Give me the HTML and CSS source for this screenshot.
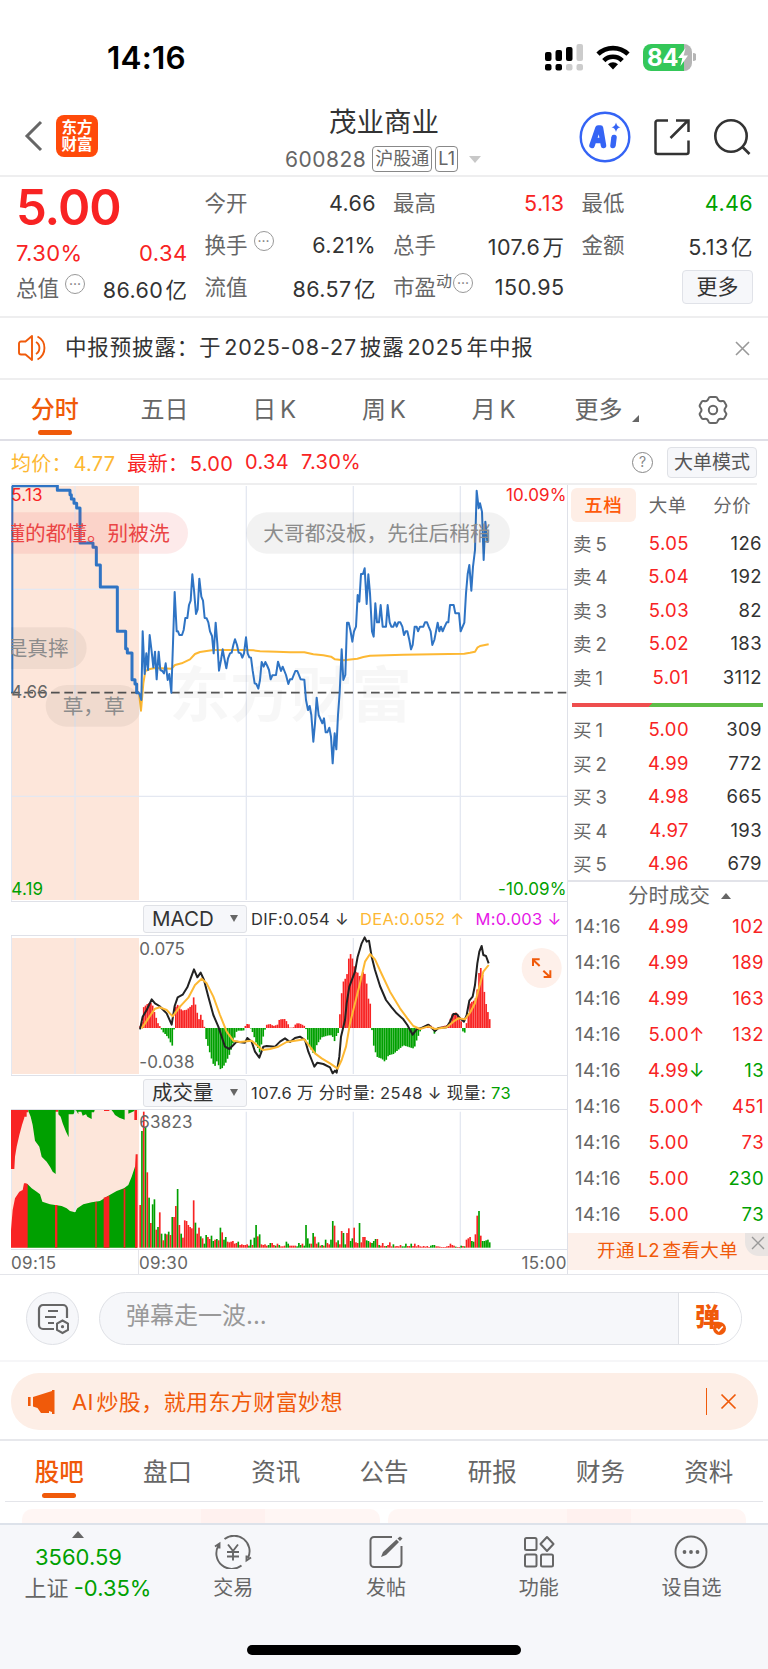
FILE: index.html
```html
<!DOCTYPE html>
<html lang="zh-CN">
<head>
    <meta charset="UTF-8">
    <title>茂业商业 600828</title>
    <link rel="stylesheet" href="styles.css">
</head>
<body>

    <div class="status-bar">
        <span class="clock">14:16</span>
        <div class="status-icons">
            <svg width="38" height="27" viewBox="0 0 38 27">
                <g fill="#000"><rect x="0" y="8" width="6.5" height="9" rx="2"/><rect x="10.5" y="6" width="6.5" height="11" rx="2"/><rect x="21" y="3" width="6.5" height="14" rx="2"/><rect x="0" y="20" width="6.5" height="6.5" rx="2"/><rect x="10.5" y="20" width="6.5" height="6.5" rx="2"/></g>
                <g fill="#ccc"><rect x="31.5" y="0" width="6.5" height="17" rx="2"/><rect x="21" y="20" width="6.5" height="6.5" rx="2"/><rect x="31.5" y="20" width="6.5" height="6.5" rx="2"/></g>
            </svg>
            <svg class="wifi" width="34" height="25" viewBox="0 0 34 25">
                <g fill="none" stroke="#000" stroke-width="4.6"><path d="M2 9.200a21.500 21.500 0 0 1 30 0"/><path d="M7.800 15.600a13 13 0 0 1 18.400 0"/></g>
                <path d="M17 24.500l-5-5.200a7.300 7.300 0 0 1 10 0z"/>
            </svg>
            <div class="battery">84<svg width="10" height="18" viewBox="0 0 10 18"><path d="M7.500 0L0 10h4.300L2.500 18 10 7.500H5.700z" fill="#fff"/></svg></div>
            <svg class="battery-tip" width="3" height="8" viewBox="0 0 3 8"><path d="M0 0a4 4 0 0 1 0 8z" fill="#b5b5b5"/></svg>
        </div>
    </div>

    <div class="nav">
        <div class="nav-left">
            <svg width="20" height="32" viewBox="0 0 20 32"><path d="M17 2L3 16l14 14" fill="none" stroke="#666" stroke-width="3"/></svg>
            <div class="logo">东方<br>财富</div>
        </div>
        <div class="nav-title">
            <div class="stock-name">茂业商业</div>
            <div class="stock-code"><span class="code">600828</span><span class="badge">沪股通</span><span class="badge">L1</span><i class="caret"></i></div>
        </div>
        <div class="nav-right">
            <svg width="52" height="52" viewBox="0 0 52 52">
                <circle cx="26" cy="26" r="24.300" fill="none" stroke="#3564f5" stroke-width="2.400"/>
                <g fill="none" stroke="#3564f5" stroke-width="5.500" stroke-linecap="round" stroke-linejoin="round"><path d="M13 34.500L19 17h2.500L24.500 34.500M17 29.500h6"/><path d="M35 26.500L34 34.500"/></g>
                <path d="M37 11.500q.8 4 4.500 4.800-3.700.8-4.500 4.800-.8-4-4.500-4.800 3.700-.8 4.500-4.800z" fill="#3564f5"/>
            </svg>
            <svg class="share" width="38" height="38" viewBox="0 0 38 38"><g fill="none" stroke="#333" stroke-width="2.500"><path d="M15 2.500H4.500a2 2 0 0 0-2 2V34a2 2 0 0 0 2 2h29a2 2 0 0 0 2-2V22.500"/><path d="M17.500 20L35 2.500M23 2.500h12.500V14"/></g></svg>
            <svg width="40" height="40" viewBox="0 0 40 40"><g fill="none" stroke="#333" stroke-width="2.600"><circle cx="18" cy="19" r="15.700"/><path d="M29.500 30l7 7"/></g></svg>
        </div>
    </div>

    <div class="quote">
        <div class="q-main">
            <div class="price">5.00</div>
            <div class="q-row red"><span>7.30%</span><span>0.34</span></div>
            <div class="q-row last"><label>总值<i class="dots">···</i></label><span>86.60 亿</span></div>
        </div>
        <div class="q-col">
            <div class="q-row"><label>今开</label><span>4.66</span></div>
            <div class="q-row"><label>换手<i class="dots">···</i></label><span>6.21%</span></div>
            <div class="q-row"><label>流值</label><span>86.57 亿</span></div>
        </div>
        <div class="q-col">
            <div class="q-row"><label>最高</label><span class="red">5.13</span></div>
            <div class="q-row"><label>总手</label><span>107.6 万</span></div>
            <div class="q-row"><label>市盈<sup>动</sup><i class="dots">···</i></label><span>150.95</span></div>
        </div>
        <div class="q-col">
            <div class="q-row"><label>最低</label><span class="green">4.46</span></div>
            <div class="q-row"><label>金额</label><span>5.13 亿</span></div>
            <div class="q-row"><div class="more-btn">更多</div></div>
        </div>
    </div>

    <div class="notice">
        <svg width="30" height="26" viewBox="0 0 30 26"><g fill="none" stroke="#f05a0a" stroke-width="1.900" stroke-linejoin="round"><path d="M14 1L7.500 6.500H3a2 2 0 0 0-2 2v9a2 2 0 0 0 2 2h4.500L14 25z"/><path d="M18 7a7 7 0 0 1 0 12M19.500 1.500a13 13 0 0 1 0 23"/></g></svg>
        <span class="notice-text">中报预披露：于 2025-08-27 披露 2025 年中报</span>
        <svg width="15" height="15" viewBox="0 0 15 15"><path d="M1 1l13 13M14 1L1 14" stroke="#999" stroke-width="1.600"/></svg>
    </div>

    <div class="period-tabs">
        <span class="active">分时</span><span>五日</span><span>日 K</span><span>周 K</span><span>月 K</span>
        <span class="tab-more">更多<i></i></span>
        <span class="gear"><svg width="30" height="30" viewBox="0 0 30 30"><g fill="none" stroke="#666" stroke-width="2"><path stroke-linejoin="round" d="M10.500 3.500Q11 2 12.500 2h5q1.500 0 2 1.500 1 3.300 4.500 2.500 1.600-.4 2.300.8l1.700 3q.8 1.400-.3 2.500-2.400 2.700 0 5.400 1.100 1.100.3 2.500l-1.700 3q-.7 1.200-2.300.8-3.500-.8-4.500 2.500-.5 1.500-2 1.500h-5q-1.500 0-2-1.500-1-3.300-4.500-2.500-1.600.4-2.300-.8l-1.700-3q-.8-1.400.3-2.500 2.400-2.700 0-5.400-1.100-1.100-.3-2.500l1.700-3q.7-1.200 2.300-.8 3.500.8 4.500-2.500z"/><circle cx="15" cy="15" r="4.200"/></g></svg></span>
    </div>

    <div class="info">
        <span class="yellow">均价：<s></s>4.77</span>
        <span class="red">最新：<s></s>5.00</span><span class="red">0.34</span><span class="red">7.30%</span>
        <i class="help">?</i>
        <span class="mode-btn">大单模式</span>
    </div>

    <div class="main">
        <div class="charts">
            <svg class="price-chart" width="556" height="416" viewBox="33 45 1668 1248">
                <rect x="33" y="48" width="384" height="1242" fill="#fde6da"/>
                <g class="grid"><path d="M34 48V1293M225 48V1290M739 48V1290M1060 48V1290M1381 48V1290M33 358H1701M33 979H1701"/></g>
                <text class="watermark" x="508" y="740">东方财富</text>
                <path class="base-line" d="M33 668H1701"/>
                <polyline class="avg" points="417,668 423,722 430,640 436,603 450,597 465,594 515,596 525,585 545,580 570,568 585,552 600,546 640,540 735,540 760,541 780,544 830,545 870,547 913,547 940,553 970,556 993,560 1005,568 1030,571 1072,566 1090,561 1110,557 1210,554 1393,551 1410,548 1425,545 1432,533 1440,528 1466,523"/>
                <polyline class="px bold" points="36,47 172,47 172,61 210,61 210,74 214,74 214,87 222,87 222,100 230,100 230,114 240,114 240,219 279,219 279,232 289,232 289,285 301,285 301,351 352,351 352,484 377,484 377,536 382,536 382,549 396,549 396,629 405,629 405,642 410,642 410,668 417,668"/>
                <polyline class="px" points="37,668 37,47"/>
                <polyline class="px" points="417,668 424,690 428,484 434,612 439,550 444,600 449,495 455,545 460,592 465,545 470,628 476,545 481,600 487,603 492,610 497,580 503,630 508,612 514,668 519,520 524,366 530,484 534,484 538,495 546,495 551,480 556,444 562,444 567,405 572,392 577,313 582,360 588,432 593,418 598,326 604,380 609,392 614,444 620,445 625,457 630,484 636,498 641,550 647,458 652,520 657,602 663,570 668,538 673,565 679,595 684,565 690,550 695,548 700,525 705,508 711,525 716,548 722,550 727,563 732,550 738,502 743,550 748,562 753,563 758,602 764,640 769,642 775,656 780,630 785,576 791,590 796,576 802,588 807,600 812,628 817,616 828,615 834,575 843,603 848,590 858,615 865,642 870,628 876,628 886,603 892,603 902,628 913,629 918,690 924,720 929,708 934,735 940,815 945,760 950,683 956,735 967,760 972,745 977,787 982,787 988,773 993,800 998,880 1004,790 1009,838 1014,735 1019,668 1025,538 1030,630 1036,615 1041,458 1046,458 1051,480 1057,515 1062,484 1068,470 1073,375 1078,395 1083,312 1089,312 1094,295 1100,402 1105,313 1110,370 1116,484 1121,500 1126,400 1131,457 1137,457 1142,405 1148,470 1158,470 1163,405 1169,457 1174,470 1180,470 1185,457 1190,470 1195,457 1201,457 1207,470 1212,495 1217,484 1222,484 1228,510 1233,538 1238,525 1244,470 1250,470 1254,484 1260,470 1270,470 1275,457 1281,457 1286,470 1292,484 1297,525 1303,510 1308,484 1313,458 1318,484 1323,470 1328,484 1334,470 1340,457 1345,457 1350,405 1361,405 1366,430 1377,430 1382,484 1388,470 1393,458 1398,370 1403,312 1408,285 1414,362 1419,290 1425,240 1430,62 1436,115 1440,100 1446,125 1451,270 1456,155 1462,215 1466,215"/>
                <g class="danmu">
                    <rect class="hot" x="-40" y="127" width="604" height="124" rx="62"/>
                    <text class="hot-text" x="13" y="213">懂的都懂。别被洗</text>
                    <rect x="739" y="127" width="791" height="124" rx="62"/>
                    <text x="790" y="213">大哥都没板，先往后稍稍</text>
                    <rect x="-40" y="472" width="300" height="125" rx="62"/>
                    <text x="20" y="557">是真摔</text>
                    <rect x="137" y="645" width="287" height="125" rx="62"/>
                    <text x="188" y="731">草，草</text>
                </g>
                <g class="axis">
                    <text class="up" x="34" y="94">5.13</text>
                    <text x="34" y="685">4.66</text>
                    <text class="down" x="34" y="1274">4.19</text>
                    <text class="up" x="1700" y="94" text-anchor="end">10.09%</text>
                    <text class="down" x="1700" y="1274" text-anchor="end">-10.09%</text>
                </g>
            </svg>

            <div class="ind-head">
                <span class="select">MACD<i></i></span>
                <span>DIF:0.054 ↓</span><span class="yellow">DEA:0.052 ↑</span><span class="purple">M:0.003 ↓</span>
            </div>
            <svg class="macd-chart" width="556" height="139" viewBox="33 108 1668 417">
                <rect x="33" y="114" width="384" height="408" fill="#fde6da"/>
                <g class="grid"><path d="M34 108V525M225 114V522M739 114V522M1060 114V522M1381 114V522"/></g>
                <g id="macdBars"></g>
                <polyline class="dif" points="420,388 428,350 440,330 455,298 465,310 478,318 490,330 500,340 515,374 524,318 533,292 548,284 562,262 572,235 582,208 592,232 602,218 612,240 625,290 640,345 655,380 665,410 675,440 688,447 700,435 710,425 735,428 742,414 755,425 765,455 778,473 790,440 800,438 825,440 840,425 855,415 870,426 885,414 900,410 915,420 925,455 935,480 943,500 952,488 970,492 990,502 998,520 1005,512 1010,518 1018,470 1023,410 1035,360 1040,310 1048,260 1065,215 1073,170 1085,130 1094,112 1100,125 1107,122 1115,170 1125,210 1140,258 1158,300 1175,322 1190,340 1210,358 1222,375 1238,404 1250,388 1265,384 1285,374 1305,393 1315,384 1340,382 1350,365 1360,342 1370,342 1380,355 1392,365 1400,345 1408,302 1418,290 1425,255 1432,190 1438,155 1445,138 1450,165 1458,168 1466,190"/>
                <polyline class="avg" points="425,385 445,355 465,326 480,322 500,330 518,349 540,320 565,293 585,255 605,236 620,250 640,290 660,345 680,395 700,422 720,426 755,422 770,435 788,450 810,447 835,440 860,426 900,420 913,418 930,440 945,460 965,475 990,490 1013,506 1025,480 1038,440 1050,370 1065,310 1080,250 1095,185 1110,162 1125,178 1145,222 1170,275 1200,325 1222,355 1240,378 1260,387 1285,379 1305,387 1340,382 1360,365 1375,355 1395,358 1410,338 1425,310 1438,260 1450,215 1466,195"/>
                <circle cx="1625" cy="204" r="60" fill="#fef0ea"/>
                <path d="M1619 198l-20-19M1599 198v-20h20M1630 212l20 19M1651 211v20h-20" fill="none" stroke="#f05a0a" stroke-width="6"/>
                <g class="axis">
                    <text x="418" y="164">0.075</text>
                    <text x="418" y="504">-0.038</text>
                </g>
            </svg>

            <div class="ind-head">
                <span class="select">成交量<i></i></span>
                <span class="vol-text">107.6 万 分时量: 2548 ↓ 现量: <b>73</b></span>
            </div>
            <svg class="vol-chart" width="556" height="139" viewBox="33 105 1668 417">
                <rect x="33" y="105" width="384" height="413" fill="#fde6da"/>
                <g fill="#f82323">
                    <path d="M33 102H85V112H80V125H73V128L66 150 58 180 50 215 45 245 43 282H33zM165 102h10v8h-10zM312 102h16v6h-16zM403 102h8v33h-8zM33 518V465L38 405 45 370 58 350 68 345 72 325H78L84 328V518z"/>
                </g>
                <g fill="#00a000">
                    <path d="M85 102H167V297L158 290 150 275 140 260 125 245 118 215 105 197 98 150 92 125 85 108zM175 102H206V187L198 170 188 145 182 125 175 118zM206 102H285L282 112H275V132L262 125 258 118 248 122 244 110H235V118L228 106 220 118H206zM332 102H374V134L358 128 345 120 340 112zM385 102H403V108L385 116z"/>
                    <path d="M83 518V328L95 340 110 350 120 358 127 380 150 388 170 391 185 393 200 400 210 408 225 412 232 400 250 388 275 382 300 378 325 362 350 348 372 340 385 330 395 305 405 275 411 275V518z"/>
                </g>
                <path d="M165 518V390h7V518zM285 518V381h2V518zM289 518V380h2V518zM311 518V368l17-6V518zM371 518V341h5V518zM405 518V280l2-42h6V518z" fill="#f82323"/>
                <g class="grid"><path d="M34 285V370M225 105V410M739 110V522M1060 110V522M1381 110V522"/></g>
                <g id="volBars"></g>
                <g class="axis"><text x="418" y="160">63823</text></g>
            </svg>
            <div class="time-axis"><span>09:15</span><span>09:30</span><span>15:00</span></div>
        </div>

        <div class="book">
            <div class="book-tabs"><span class="active">五档</span><span>大单</span><span>分价</span></div>
            <div class="level"><span>卖 5</span><b>5.05</b><em>126</em></div>
            <div class="level"><span>卖 4</span><b>5.04</b><em>192</em></div>
            <div class="level"><span>卖 3</span><b>5.03</b><em>82</em></div>
            <div class="level"><span>卖 2</span><b>5.02</b><em>183</em></div>
            <div class="level"><span>卖 1</span><b>5.01</b><em>3112</em></div>
            <div class="ratio"></div>
            <div class="level"><span>买 1</span><b>5.00</b><em>309</em></div>
            <div class="level"><span>买 2</span><b>4.99</b><em>772</em></div>
            <div class="level"><span>买 3</span><b>4.98</b><em>665</em></div>
            <div class="level"><span>买 4</span><b>4.97</b><em>193</em></div>
            <div class="level"><span>买 5</span><b>4.96</b><em>679</em></div>
            <div class="ticks-title">分时成交<i></i></div>
            <div class="tick"><span>14:16</span><b>4.99</b><u></u><em>102</em></div>
            <div class="tick"><span>14:16</span><b>4.99</b><u></u><em>189</em></div>
            <div class="tick"><span>14:16</span><b>4.99</b><u></u><em>163</em></div>
            <div class="tick"><span>14:16</span><b>5.00</b><u>↑</u><em>132</em></div>
            <div class="tick"><span>14:16</span><b>4.99</b><u class="green">↓</u><em class="green">13</em></div>
            <div class="tick"><span>14:16</span><b>5.00</b><u>↑</u><em>451</em></div>
            <div class="tick"><span>14:16</span><b>5.00</b><u></u><em>73</em></div>
            <div class="tick"><span>14:16</span><b>5.00</b><u></u><em class="green">230</em></div>
            <div class="tick"><span>14:16</span><b>5.00</b><u></u><em class="green">73</em></div>
            <div class="l2-ad">开通 L2 查看大单
                <div class="l2-close"><svg width="14" height="14" viewBox="0 0 14 14"><path d="M1 1l12 12M13 1L1 13" stroke="#999" stroke-width="1.400"/></svg></div>
            </div>
        </div>
    </div>

    <div class="send-row">
        <div class="round-btn">
            <svg width="34" height="32" viewBox="0 0 34 32"><g fill="none" stroke="#666" stroke-width="2.200"><path d="M17 26H6a4 4 0 0 1-4-4V6a4 4 0 0 1 4-4h20a4 4 0 0 1 4 4v9"/><path d="M11 8h10M8 14h11M11 20h6"/><path d="M25.500 17.500l5.500 3v6.500l-5.500 3-5.500-3v-6.500z" stroke-width="2"/></g><circle cx="25.500" cy="23.700" r="1.600" fill="#666"/></svg>
        </div>
        <div class="input"><span class="placeholder">弹幕走一波...</span><span class="dan">弹<svg width="13" height="13" viewBox="0 0 13 13"><circle cx="6.500" cy="6.500" r="6.500" fill="#f05a0a"/><path d="M3.500 6.500l2.300 2.400 4-4.400" fill="none" stroke="#fff" stroke-width="1.600"/></svg></span></div>
    </div>

    <div class="ad-wrap">
        <div class="ad">
            <svg width="28" height="24" viewBox="0 0 28 24"><path d="M0 7h2.600v9H0zM5 7L24 1V0h2.500v24H24v-2l-3-1v2h-8l-3.500-5L5 16.500z" fill="#f05a0a"/></svg>
            <span class="ad-text">AI 炒股，就用东方财富妙想</span>
            <i class="ad-line"></i>
            <svg width="17" height="17" viewBox="0 0 17 17"><path d="M1.500 1.500l14 14M15.500 1.500l-14 14" stroke="#f05a0a" stroke-width="1.700"/></svg>
        </div>
    </div>

    <div class="content-tabs">
        <span class="active">股吧</span><span>盘口</span><span>资讯</span><span>公告</span><span>研报</span><span>财务</span><span>资料</span>
    </div>
    <div class="cards"><div></div><div></div></div>

    <div class="bottom-bar">
        <div class="index">
            <i></i>
            <div class="index-value green">3560.59</div>
            <div>上证 <span class="green">-0.35%</span></div>
        </div>
        <div class="item">
            <svg width="38" height="34" viewBox="0 0 38 34"><g fill="none" stroke="#666" stroke-width="1.900"><path d="M10.500 4A15.500 15.500 0 0 1 34 23M27.500 30.500A15.500 15.500 0 0 1 4.500 10.500M1 11.500l4.500-3v5M37 22.500l-4.500 3v-5"/><path d="M14 9.500l5 6.500 5-6.500M13 17h12M13 21.500h12M19 16v9.500"/></g></svg>
            交易
        </div>
        <div class="item">
            <svg width="34" height="34" viewBox="0 0 34 34"><path d="M23 2H5a3.500 3.500 0 0 0-3.500 3.500v23A3.500 3.500 0 0 0 5 32h24a3.500 3.500 0 0 0 3.500-3.500V11" fill="none" stroke="#666" stroke-width="2"/><path d="M12 22l2-5L27.500 4.500l2.500 2.500-13 13zM28.500 3.500L31 1.500l2.500 2-2.500 2.500z" fill="#666"/></svg>
            发帖
        </div>
        <div class="item">
            <svg width="32" height="34" viewBox="0 0 32 34"><g fill="none" stroke="#666" stroke-width="2"><rect x="2" y="3" width="11.500" height="12" rx="1.500"/><rect x="2" y="19.500" width="11.500" height="12" rx="1.500"/><rect x="18" y="19.500" width="12" height="12" rx="1.500"/><path d="M24 2l6.500 7L24 16l-6.500-7z" stroke-linejoin="round"/></g></svg>
            功能
        </div>
        <div class="item">
            <svg width="34" height="34" viewBox="0 0 34 34"><circle cx="17" cy="17" r="15.500" fill="none" stroke="#666" stroke-width="1.900"/><g fill="#666"><circle cx="10.500" cy="17" r="1.900"/><circle cx="17" cy="17" r="1.900"/><circle cx="23.500" cy="17" r="1.900"/></g></svg>
            设自选
        </div>
        <div class="home-line"></div>
    </div>

    <script src="script.js"></script>
</body>
</html>
```
FILE: styles.css
```css
* {
    box-sizing: border-box;
}
body {
    margin: 0;
    width: 768px;
    height: 1669px;
    overflow: hidden;
    position: relative;
    background: #fff;
    color: #333;
    font-family: Inter, "Noto Sans CJK SC", sans-serif;
    font-size: 21px;
}
i, em, u, b {
    font-style: normal;
    font-weight: normal;
    text-decoration: none;
}
svg {
    display: block;
    flex: none;
}
.red { color: #f82323; }
.green { color: #00a000; }
.yellow { color: #fdb833; }
.purple { color: #e617e6; }

/* status bar */
.status-bar {
    height: 100px;
    padding: 14px 72px 0 107px;
    display: flex;
    justify-content: space-between;
    align-items: center;
}
.clock {
    font-size: 31.500px;
    font-weight: 600;
    color: #000;
    letter-spacing: 0.2px;
}
.status-icons {
    display: flex;
    align-items: center;
}
.wifi {
    margin: 0 13px;
}
.battery {
    width: 49px;
    height: 27px;
    border-radius: 8px;
    background: linear-gradient(90deg, #34c759 84%, #b5b5b5 84%);
    color: #fff;
    font-size: 24px;
    font-weight: 700;
    letter-spacing: -0.5px;
    display: flex;
    align-items: center;
    justify-content: center;
}
.battery-tip {
    margin-left: 1px;
}

/* title bar */
.nav {
    height: 77px;
    border-bottom: 2px solid #eeeeef;
    display: flex;
    justify-content: space-between;
}
.nav-left {
    width: 230px;
    padding: 15px 0 0 24px;
    display: flex;
    align-items: flex-start;
}
.nav-left svg {
    margin: 5px 12px 0 0;
}
.logo {
    width: 42px;
    height: 42px;
    border-radius: 8px;
    background: #ff4a0a;
    color: #fff;
    font-size: 15.500px;
    line-height: 17px;
    font-weight: 700;
    text-align: center;
    padding-top: 4px;
}
.nav-title {
    text-align: center;
}
.stock-name {
    font-size: 27.500px;
    line-height: 36px;
    margin-top: 4px;
}
.stock-code {
    display: flex;
    align-items: center;
    justify-content: center;
    color: #666;
    height: 30px;
    margin: 4px 2px 0 0;
}
.code {
    font-size: 21px;
    letter-spacing: 0.5px;
    margin-right: 6px;
}
.badge {
    height: 26px;
    border: 1px solid #888;
    border-radius: 4px;
    font-size: 18px;
    line-height: 24px;
    padding: 0 2px;
    margin-right: 3px;
}
.caret {
    border: 6px solid transparent;
    border-top: 7px solid #c8c8c8;
    border-bottom: 0;
    margin-left: 8px;
}
.nav-right {
    width: 230px;
    padding: 11px 15px 0 0;
    display: flex;
    justify-content: flex-end;
    align-items: flex-start;
}
.share {
    margin: 7px 22px 0 22px;
}
.nav-right svg:last-child {
    margin-top: 6px;
}

/* quote */
.quote {
    height: 141px;
    border-bottom: 2px solid #eeeeef;
    padding: 5px 15px 0 16px;
    display: grid;
    grid-template-columns: repeat(4, 1fr);
    column-gap: 17px;
}
.price {
    height: 51px;
    line-height: 51px;
    font-size: 49px;
    font-weight: 600;
    color: #f82323;
    letter-spacing: -1px;
}
.q-row {
    height: 42px;
    display: flex;
    justify-content: space-between;
    align-items: center;
    white-space: nowrap;
    word-spacing: -4px;
}
.q-main .q-row {
    height: 40px;
}
.q-main .last {
    height: 30px;
}
.q-row label {
    color: #666;
    font-size: 21.500px;
    line-height: 28px;
    display: flex;
    align-items: center;
}
.q-row span {
    font-size: 21.500px;
    letter-spacing: 0.4px;
}
.q-main .red span {
    font-size: 22px;
}
.q-row sup {
    font-size: 16px;
    line-height: 16px;
    align-self: flex-start;
}
.dots {
    width: 20px;
    height: 20px;
    border: 1px solid #999;
    border-radius: 50%;
    font-size: 14px;
    line-height: 17px;
    text-align: center;
    margin: -8px 0 0 6px;
    color: #777;
}
sup + .dots {
    margin-left: 1px;
}
.more-btn {
    width: 71px;
    height: 34px;
    line-height: 31px;
    text-align: center;
    border: 1px solid #e0e2e8;
    border-radius: 4px;
    background: #f6f7fa;
    margin-left: auto;
}

/* notice */
.notice {
    height: 62px;
    border-bottom: 2px solid #eeeeef;
    padding: 0 18px;
    display: flex;
    align-items: center;
}
.notice-text {
    flex: 1;
    padding: 0 0 5px 17px;
    font-size: 21.500px;
    letter-spacing: 0.85px;
    word-spacing: -4px;
}

/* period tabs */
.period-tabs {
    height: 61px;
    border-bottom: 2px solid #dfdfe6;
    display: flex;
    font-size: 24px;
    line-height: 60px;
    color: #666;
    text-align: center;
    white-space: nowrap;
    word-spacing: -3px;
}
.period-tabs span {
    width: 109.700px;
    position: relative;
}
.period-tabs .active, .content-tabs .active {
    color: #f05a0a;
    font-weight: 500;
    position: relative;
}
.period-tabs .active::after, .content-tabs .active::after {
    content: "";
    position: absolute;
    left: 50%;
    bottom: 4px;
    width: 34px;
    height: 5px;
    margin-left: -17px;
    border-radius: 3px;
    background: #f05a0a;
}
.period-tabs .tab-more {
    width: 100px;
}
.tab-more i {
    position: absolute;
    right: 9px;
    bottom: 17px;
    border-left: 7px solid transparent;
    border-bottom: 7px solid #666;
}
.period-tabs .gear {
    width: 118px;
    display: flex;
    align-items: center;
    padding-left: 50px;
}

/* latest values */
.info {
    height: 44px;
    margin: 0 11px;
    border-bottom: 2px solid #eeeeef;
    display: flex;
    align-items: center;
    gap: 12px;
    font-size: 20px;
    letter-spacing: 0.3px;
    white-space: nowrap;
}
.info s {
    padding-left: 1.500px;
}
.help {
    width: 21px;
    height: 21px;
    border: 1.500px solid #888;
    border-radius: 50%;
    font-size: 14px;
    line-height: 18px;
    text-align: center;
    color: #888;
    margin: 0 2px 0 auto;
    letter-spacing: 0;
}
.mode-btn {
    width: 90px;
    height: 31px;
    line-height: 29px;
    text-align: center;
    border: 1px solid #dfe1e6;
    border-radius: 4px;
    background: #f6f7fa;
    color: #555;
    font-size: 19px;
    letter-spacing: 0;
}

/* charts */
.main {
    display: flex;
    height: 790px;
    border-bottom: 1px solid #e4e5ea;
}
.charts {
    width: 568px;
    padding-left: 11px;
    border-right: 1px solid #dfe1e8;
}
.price-chart, .macd-chart, .vol-chart {
    border-bottom: 1px solid #dfe1e8;
    box-sizing: content-box;
}
.grid path {
    fill: none;
    stroke: #e4e8f1;
    stroke-width: 4;
}
.watermark {
    font-size: 182px;
    font-weight: 700;
    fill: #000;
    fill-opacity: 0.03;
}
.base-line {
    stroke: #555;
    stroke-width: 5;
    stroke-dasharray: 26 14;
}
.px, .avg, .dif {
    fill: none;
    stroke-width: 6;
    stroke-linejoin: round;
}
.px { stroke: #2f74c4; }
.px.bold { stroke-width: 9; }
.avg { stroke: #fdb833; }
.dif { stroke: #222; }
.danmu rect {
    fill: #000;
    fill-opacity: 0.052;
}
.danmu .hot {
    fill: #f03c3c;
    fill-opacity: 0.11;
}
.danmu text {
    font-size: 62px;
    fill: #8c8c8c;
}
.danmu .hot-text {
    fill: #ea4545;
}
.axis text {
    font-size: 51px;
    letter-spacing: 0.5px;
    fill: #666;
}
.axis .up { fill: #f82323; }
.axis .down { fill: #00a000; }

.ind-head {
    height: 34px;
    border-bottom: 1px solid #dfe1e8;
    padding-left: 132px;
    display: flex;
    align-items: center;
    gap: 11px;
    font-size: 16.500px;
    letter-spacing: 0.3px;
    white-space: nowrap;
}
.select {
    flex: none;
    width: 104px;
    height: 28px;
    border: 1px solid #dfe1e6;
    border-radius: 3px;
    background: #f6f7fa;
    padding: 0 8px;
    margin-right: -7px;
    font-size: 20.500px;
    letter-spacing: 0;
    line-height: 24px;
    display: flex;
    align-items: center;
    justify-content: space-between;
}
.select i {
    border: 4px solid transparent;
    border-top: 7px solid #666;
    border-bottom: 0;
}
.vol-text {
    padding-bottom: 2px;
    letter-spacing: 0.55px;
    word-spacing: -0.5px;
}
.vol-text b {
    color: #00a000;
}
.time-axis {
    height: 25px;
    display: flex;
    align-items: center;
    font-size: 17px;
    letter-spacing: 0.4px;
    color: #666;
}
.time-axis span:first-child {
    width: 128px;
    height: 25px;
    line-height: 27px;
    border-right: 1px solid #e4e5ea;
}
.time-axis span:last-child {
    margin-left: auto;
}

/* order book */
.book {
    width: 200px;
    padding: 3px 0 0 0;
    color: #666;
    font-size: 18.500px;
    letter-spacing: 0.4px;
}
.book-tabs {
    display: flex;
    padding-left: 3px;
    height: 38px;
}
.book-tabs span {
    width: 64.500px;
    height: 34px;
    line-height: 34px;
    text-align: center;
    border-radius: 6px;
}
.book-tabs .active {
    color: #ff5a0a;
    background: #feeee6;
    font-weight: 500;
}
.level, .tick {
    height: 33.500px;
    display: flex;
    align-items: center;
    padding: 0 6px 0 5px;
    word-spacing: -2px;
}
.level span {
    width: 50px;
}
.level b {
    width: 66px;
    text-align: right;
    color: #f82323;
}
.level em {
    flex: 1;
    text-align: right;
    color: #333;
}
.ratio {
    height: 4px;
    margin: 9px 5px 6px 4px;
    background: linear-gradient(135deg, #ee4e4e 41.200%, #5fbd47 41.200%);
}
.ticks-title {
    height: 29px;
    border-top: 2px solid #e2e3e9;
    font-size: 20.500px;
    letter-spacing: 0;
    line-height: 26px;
    padding-left: 60px;
    display: flex;
    align-items: center;
}
.ticks-title i, .index i {
    border: 5px solid transparent;
    border-bottom: 6px solid #666;
    border-top: 0;
    margin-left: 11px;
}
.tick {
    height: 35.900px;
    padding: 0 4px 1px 7px;
}
.tick span {
    width: 50px;
}
.tick b {
    width: 64px;
    text-align: right;
    color: #f82323;
}
.tick u {
    width: 14px;
    color: #f82323;
}
.tick em {
    flex: 1;
    text-align: right;
    color: #f82323;
}
.tick .green {
    color: #00a000;
}
.l2-ad {
    height: 37px;
    line-height: 34px;
    margin-top: 1px;
    background: #fdf0ea;
    color: #f05a0a;
    font-size: 18.500px;
    padding-left: 29px;
    word-spacing: -3px;
    position: relative;
}
.l2-close {
    position: absolute;
    right: 0;
    top: 0;
    width: 23px;
    height: 23px;
    padding: 3px 0 0 6px;
    border-bottom-left-radius: 14px;
    background: #e9e4e2;
}

/* danmu input */
.send-row {
    height: 87px;
    border-bottom: 2px solid #f6f6f8;
    display: flex;
    align-items: center;
    padding: 2px 26px 0;
}
.round-btn {
    width: 53px;
    height: 53px;
    border: 1px solid #dfe1e6;
    border-radius: 50%;
    background: #f6f7fa;
    display: flex;
    align-items: center;
    justify-content: center;
    padding-left: 3px;
}
.input {
    width: 643px;
    height: 53px;
    margin-left: 20px;
    border: 1px solid #dfe1e6;
    border-radius: 27px;
    background: #f6f7fa;
    overflow: hidden;
    display: flex;
}
.placeholder {
    flex: 1;
    padding-left: 26px;
    line-height: 46px;
    font-size: 24px;
    color: #999;
}
.dan {
    width: 63px;
    border-left: 1px solid #dfe1e6;
    background: #fff;
    color: #f05a0a;
    font-size: 25px;
    font-weight: 900;
    line-height: 48px;
    padding-left: 16px;
    position: relative;
}
.dan svg {
    position: absolute;
    left: 34px;
    top: 29px;
}

/* promo strip */
.ad-wrap {
    height: 79px;
    border-bottom: 2px solid #e7e8ec;
    padding: 11px 10px 0 11px;
}
.ad {
    height: 57px;
    border-radius: 28px;
    background: #fdeee6;
    color: #f05a0a;
    padding: 0 21px 0 17px;
    display: flex;
    align-items: center;
}
.ad-text {
    flex: 1;
    padding: 0 0 4px 16px;
    font-size: 22px;
    letter-spacing: 0.4px;
    word-spacing: -4px;
}
.ad-line {
    width: 1px;
    height: 27px;
    background: #f05a0a;
    margin-right: 13px;
}

.content-tabs {
    height: 61px;
    margin: 0 5px;
    border-bottom: 1px solid #e4e5ea;
    display: flex;
    font-size: 24.500px;
    line-height: 63px;
    color: #666;
    text-align: center;
}
.content-tabs span {
    flex: 1;
}
.content-tabs .active::after {
    bottom: 3px;
}
.cards {
    display: flex;
    gap: 8px;
    padding: 7px 22px 0;
}
.cards div {
    flex: 1;
    height: 20px;
    border-radius: 10px 10px 0 0;
    background: linear-gradient(90deg, #fff6f4 50%, #fff1ef 50%, #fff1ef 68%, #fff6f4 68%);
}

/* bottom bar */
.bottom-bar {
    position: absolute;
    left: 0;
    bottom: 0;
    width: 768px;
    height: 146px;
    border-top: 2px solid #dde2ea;
    background: #f6f7fa;
    display: flex;
    color: #666;
}
.index {
    width: 157px;
    font-size: 22px;
    line-height: 31px;
    text-align: center;
    white-space: nowrap;
    padding-left: 19px;
    word-spacing: -1px;
}
.index i {
    display: block;
    width: 12px;
    border-width: 0 6px 7px;
    margin: 6px auto 4px 53px;
}
.index-value {
    margin-right: 19px;
}
.item {
    width: 152.700px;
    padding-top: 10px;
    display: flex;
    flex-direction: column;
    align-items: center;
    gap: 3px;
    font-size: 20px;
}
.home-line {
    position: absolute;
    left: 247px;
    bottom: 14px;
    width: 274px;
    height: 10px;
    border-radius: 5px;
    background: #000;
}
```
FILE: script.js
```js
const RED = '#f82323';
const GREEN = '#00a000';
const START = 420;   // x of the 09:30 bar
const STEP = 5.35;   // one minute

function addBar(box, x, y, h, color) {
    const r = document.createElementNS('http://www.w3.org/2000/svg', 'rect');
    r.setAttribute('x', x);
    r.setAttribute('y', y);
    r.setAttribute('width', 5);
    r.setAttribute('height', h);
    r.setAttribute('fill', color);
    box.appendChild(r);
}

// MACD histogram, [x, value], filled in minute by minute
const macd = [
    [417,0],[425,15],[430,62],[445,75],[455,76],[465,40],[475,10],[482,2],[486,-10],[495,-18],[505,-30],[516,-54],[521,-35],
    [523,60],[535,72],[545,52],[560,55],[575,68],[581,94],[590,50],[597,25],[602,40],[608,22],[612,10],
    [615,-22],[625,-60],[635,-95],[643,-118],[650,-100],[662,-126],[675,-108],[690,-75],[700,-40],[710,-8],[730,-8],
    [738,12],[746,12],[751,0],[757,-12],[765,-35],[778,-75],[790,-22],[795,-3],[800,10],[810,12],[820,6],[832,10],[838,26],
    [855,27],[862,15],[870,0],[880,2],[888,14],[898,14],[910,8],[917,3],[919,-20],[928,-55],[943,-82],[950,-50],[965,-28],
    [985,-22],[997,-22],[1001,-46],[1008,-24],[1013,-24],[1016,8],[1021,60],[1027,135],[1040,155],[1044,200],[1050,225],
    [1058,205],[1065,170],[1075,165],[1080,150],[1090,170],[1098,155],[1102,95],[1110,75],[1114,20],[1116,-15],[1122,-62],
    [1132,-88],[1145,-92],[1155,-102],[1165,-82],[1180,-78],[1195,-65],[1210,-52],[1235,-60],[1242,-62],[1250,-35],
    [1260,-10],[1265,2],[1285,12],[1298,3],[1303,-18],[1310,-5],[1320,3],[1345,10],[1355,40],[1365,48],[1375,40],[1385,15],
    [1388,-10],[1394,-14],[1400,20],[1410,75],[1425,85],[1432,120],[1438,180],[1445,180],[1455,85],[1465,40],[1473,10]
];
const macdBox = document.getElementById('macdBars');
for (let i = 0; i < 197; i++) {
    const x = START + i * STEP;
    const n = macd.findIndex(p => p[0] > x);
    if (n < 1) continue;
    const a = macd[n - 1], b = macd[n];
    const v = a[1] + (b[1] - a[1]) * (x - a[0]) / (b[0] - a[0]);
    addBar(macdBox, x - 2, v > 0 ? 384 - v : 384, Math.abs(v), v > 0 ? RED : GREEN);
}

// volume per minute
const volume = ('r128 g350 r408 g360 r226 g150 r74 g130 g145 r54 g62 r106 g42 r22 g42 r40 g48 r38 g92 r92 ' +
    'r125 g176 r68 g42 r30 r82 r80 r68 r62 r58 r142 g75 r42 r60 g34 r28 g12 g38 r32 r26 ' +
    'g36 g20 r24 g26 r22 g60 r46 g24 g32 r18 r16 r18 r20 r12 r14 g18 r8 r10 r8 r8 ' +
    'r10 g6 g24 r8 g30 g68 r34 g40 r10 r8 r10 r6 g8 g14 r14 r8 g6 r12 g8 r4 ' +
    'r4 r6 g18 g12 r6 r6 r6 r6 g4 g14 g8 r12 g6 g68 g28 g12 r12 g44 r33 r12 ' +
    'g16 r6 g8 r6 g24 r14 r10 g24 g80 r66 r16 g22 r10 r50 g44 g10 r44 r58 g20 g28 ' +
    'r60 r16 r14 g74 r16 r32 r32 g22 g20 r16 g14 g20 g26 r26 g8 r6 r14 r5 g5 r8 ' +
    'r16 r4 g10 r4 r5 r4 r8 g4 g4 g12 r5 r5 g12 r5 r12 r4 r8 r4 r3 r5 ' +
    'r3 r5 r2 g6 g8 g8 r4 r4 r3 r2 r2 r2 r4 r5 r12 r8 r6 g3 r2 r2 ' +
    'g6 r5 g4 r24 r28 r32 g20 g18 r40 r96 g110 r36 g20 g20 g22 g24 g16').split(' ');
const volBox = document.getElementById('volBars');
volume.forEach((s, i) => {
    const h = Number(s.slice(1));
    addBar(volBox, START + i * STEP - 2, 518 - h, h, s[0] === 'r' ? RED : GREEN);
});
```
